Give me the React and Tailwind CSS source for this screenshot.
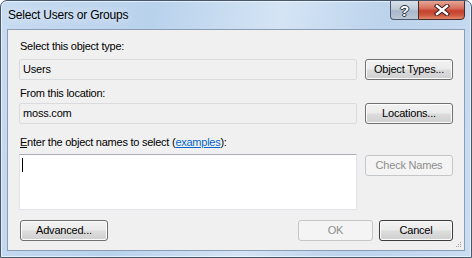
const FONT = { fontFamily: '"Liberation Sans", Arial, sans-serif' };

function Button({ children, className = '', disabled = false, focused = false }) {
  return (
    <div
      className={
        'flex items-center justify-center h-[21px] rounded-[3px] border text-[11px] leading-none tracking-[-0.2px] ' +
        (disabled
          ? 'border-[#c3c7ca] bg-[#f4f4f4] text-[#8d8d8d] '
          : focused
          ? 'border-[#3c3c3c] bg-[linear-gradient(#f2f2f2_0%,#ebebeb_48%,#dddddd_52%,#cfcfcf_100%)] text-black shadow-[inset_0_0_0_1px_#fcfcfc] '
          : 'border-[#707070] bg-[linear-gradient(#f2f2f2_0%,#ebebeb_48%,#dddddd_52%,#cfcfcf_100%)] text-black shadow-[inset_0_0_0_1px_#fcfcfc] ') +
        className
      }
    >
      {children}
    </div>
  );
}

function Field({ value }) {
  return (
    <div className="w-[338px] h-[21px] flex items-center pl-[3px] rounded-[2px] border border-[#dadbdf] bg-[#f0f0f0] text-[11px] tracking-[-0.2px] text-black">
      {value}
    </div>
  );
}

export default function App() {
  return (
    <div
      className="w-[472px] h-[258px] flex flex-col rounded-t-[7px] border border-[#44576e] bg-[linear-gradient(100deg,#c7dbf1_0%,#b9d2ec_30%,#d4e4f5_55%,#bcd3ec_75%,#c9ddf2_100%)] shadow-[inset_0_0_0_1px_rgba(255,255,255,0.6)] overflow-hidden"
      style={FONT}
    >
      <div className="h-[28px] flex items-start justify-between">
        <div className="pl-[7px] pt-[7px] text-[12px] leading-[14px] tracking-[-0.2px] text-black [text-shadow:0_0_8px_rgba(255,255,255,0.9)]">
          Select Users or Groups
        </div>
        <div className="flex mr-[6px] -mt-px">
          <div className="w-[28px] h-[20px] flex items-center justify-center rounded-bl-[4px] border border-[#4a5a6e] border-r-0 bg-[linear-gradient(#d8e1ea_0%,#bfcbd8_45%,#a9b8c9_55%,#b9c7d6_100%)]">
            <span className="text-[15px] font-bold leading-none text-white [text-shadow:0_0_1px_#2a3440,1px_0_0_#2a3440,-1px_0_0_#2a3440,0_1px_0_#2a3440,0_-1px_0_#2a3440]">
              ?
            </span>
          </div>
          <div className="w-[47px] h-[20px] flex items-center justify-center rounded-br-[4px] border border-[#4a2a26] bg-[linear-gradient(#e6a595_0%,#d8715f_40%,#c4402c_55%,#cf5a40_80%,#e08a70_100%)]">
            <svg width="16" height="12" viewBox="0 0 16 12">
              <path d="M3 2 L13 10 M13 2 L3 10" stroke="#3a2020" strokeWidth="4.4" strokeLinecap="square" />
              <path d="M3 2 L13 10 M13 2 L3 10" stroke="#ffffff" strokeWidth="2.4" strokeLinecap="square" />
            </svg>
          </div>
        </div>
      </div>

      <div className="mx-[6px] h-[222px] border border-[#8b9db3] bg-[#f0f0f0] flex flex-col pl-[11px] pt-[9px] relative tracking-[-0.25px]">
        <div className="h-[14px] text-[11px] leading-[14px] text-black ml-px">Select this object type:</div>
        <div className="mt-[6px] flex gap-[8px]">
          <Field value="Users" />
          <Button className="w-[88px]">Object Types...</Button>
        </div>

        <div className="mt-[6px] h-[14px] text-[11px] leading-[14px] text-black ml-px">From this location:</div>
        <div className="mt-[3px] flex gap-[8px]">
          <Field value="moss.com" />
          <Button className="w-[88px]">Locations...</Button>
        </div>

        <div className="mt-[11px] h-[14px] text-[11px] leading-[14px] text-black ml-px">
          <span className="underline">E</span>nter the object names to select (
          <span className="text-[#0066cc] underline">examples</span>):
        </div>
        <div className="mt-[5px] flex gap-[8px] items-start">
          <div className="w-[338px] h-[56px] border border-[#e2e3ea] border-t-[#abadb3] bg-white pl-[2px] pt-[3px]">
            <div className="w-px h-[14px] bg-black" />
          </div>
          <Button className="w-[88px] mt-px" disabled>
            Check Names
          </Button>
        </div>

        <div className="mt-[10px] flex items-center">
          <Button className="w-[88px] ml-px">Advanced...</Button>
          <div className="flex-1" />
          <Button className="w-[75px]" disabled>
            OK
          </Button>
          <Button className="w-[74px] ml-[6px] mr-[11px]" focused>
            Cancel
          </Button>
        </div>

        <svg className="absolute right-[1px] bottom-[1px]" width="10" height="10" viewBox="0 0 10 10">
          <rect x="7" y="3" width="1" height="1" fill="#a0a0a0" />
          <rect x="5" y="5" width="1" height="1" fill="#a0a0a0" />
          <rect x="7" y="5" width="1" height="1" fill="#a0a0a0" />
          <rect x="3" y="7" width="1" height="1" fill="#a0a0a0" />
          <rect x="5" y="7" width="1" height="1" fill="#a0a0a0" />
          <rect x="7" y="7" width="1" height="1" fill="#a0a0a0" />
        </svg>
      </div>
    </div>
  );
}
